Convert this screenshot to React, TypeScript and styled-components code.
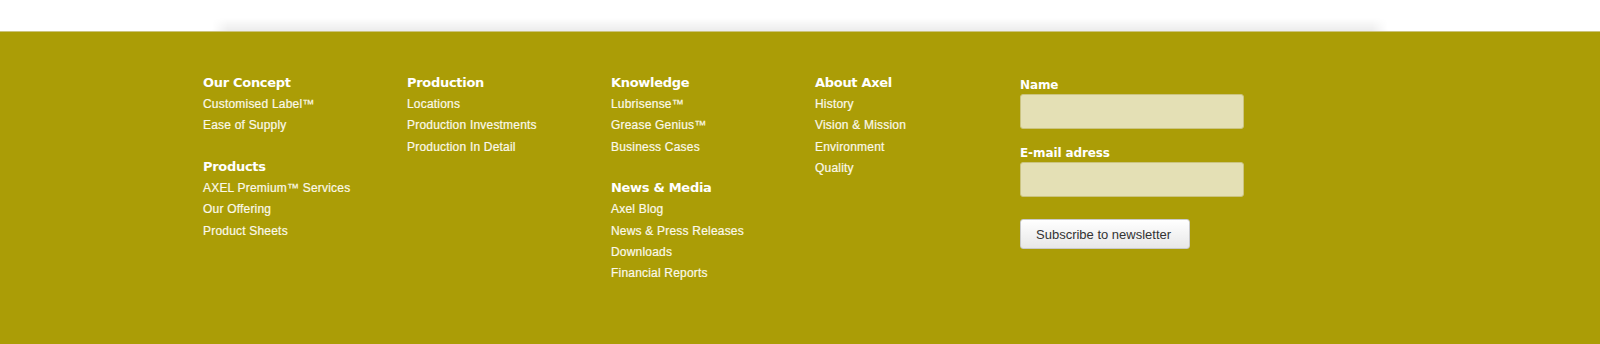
import styled, { createGlobalStyle } from 'styled-components'

const GlobalStyle = createGlobalStyle`
  html, body { margin: 0; padding: 0; background: #fff; }
  body { font-family: "Liberation Sans", Arial, sans-serif; }
`

const COLUMNS: { title: string; links: string[] }[][] = [
  [
    { title: 'Our Concept', links: ['Customised Label™', 'Ease of Supply'] },
    { title: 'Products', links: ['AXEL Premium™ Services', 'Our Offering', 'Product Sheets'] },
  ],
  [
    { title: 'Production', links: ['Locations', 'Production Investments', 'Production In Detail'] },
  ],
  [
    { title: 'Knowledge', links: ['Lubrisense™', 'Grease Genius™', 'Business Cases'] },
    { title: 'News & Media', links: ['Axel Blog', 'News & Press Releases', 'Downloads', 'Financial Reports'] },
  ],
  [
    { title: 'About Axel', links: ['History', 'Vision & Mission', 'Environment', 'Quality'] },
  ],
]

// ─── Layout ───────────────────────────────────────────────────────────────────

const Top = styled.div`
  height: 31px;
  display: flex;
  justify-content: center;
  align-items: flex-end;
`

const Shade = styled.div`
  width: 1176px;
  height: 13px;
  background: linear-gradient(to bottom, rgba(0, 0, 0, 0), rgba(0, 0, 0, 0.075));
  -webkit-mask-image: linear-gradient(to right, transparent 0, #000 16px, #000 calc(100% - 16px), transparent 100%);
  mask-image: linear-gradient(to right, transparent 0, #000 16px, #000 calc(100% - 16px), transparent 100%);
`

const Footer = styled.footer`
  height: 313px;
  box-sizing: border-box;
  background: #ab9d06;
  border-top: 1px solid #cbc37c;
  padding-top: 40px;
`

const Inner = styled.div`
  display: flex;
  padding-left: 203px;
`

const Column = styled.div`
  width: 204px;
  display: flex;
  flex-direction: column;
  gap: 19px;
`

const Group = styled.div`
  display: flex;
  flex-direction: column;
`

const Heading = styled.h4`
  margin: 0;
  font-family: "DejaVu Sans", Verdana, sans-serif;
  font-weight: bold;
  font-size: 13px;
  line-height: 22px;
  color: #fff;
  letter-spacing: -0.3px;
`

const LinkItem = styled.a`
  display: block;
  font-family: "Liberation Sans", Arial, sans-serif;
  font-size: 12px;
  line-height: 21.4px;
  color: #fbf9ea;
  text-decoration: none;
  letter-spacing: 0.2px;
  -webkit-text-stroke: 0.2px #fbf9ea;
`

const Form = styled.form`
  width: 224px;
  margin-left: 1px;
  padding-top: 4px;
  display: flex;
  flex-direction: column;
`

const Label = styled.label`
  font-family: "DejaVu Sans", Verdana, sans-serif;
  font-weight: bold;
  font-size: 12px;
  line-height: 18px;
  color: #fff;
  letter-spacing: -0.1px;
`

const Input = styled.input<{ $last?: boolean }>`
  box-sizing: border-box;
  width: 224px;
  height: 35px;
  margin: 0 0 ${p => (p.$last ? '22px' : '15px')} 0;
  background: #e4e0b5;
  border: 1px solid #cbc47f;
  border-radius: 3px;
  outline: none;
`

const Button = styled.button`
  align-self: flex-start;
  height: 30px;
  padding: 0 18px 0 15px;
  font-family: "Liberation Sans", Arial, sans-serif;
  font-size: 13px;
  color: #333;
  background: linear-gradient(to bottom, #ffffff, #e8e8e8);
  border: 1px solid #c9c9c9;
  border-radius: 3px;
  cursor: pointer;
`

// ─── App ──────────────────────────────────────────────────────────────────────

export default function App() {
  return (
    <>
      <GlobalStyle />
      <Top>
        <Shade />
      </Top>
      <Footer>
        <Inner>
          {COLUMNS.map((groups, i) => (
            <Column key={i}>
              {groups.map(g => (
                <Group key={g.title}>
                  <Heading>{g.title}</Heading>
                  {g.links.map(l => (
                    <LinkItem key={l} href="#">{l}</LinkItem>
                  ))}
                </Group>
              ))}
            </Column>
          ))}
          <Form onSubmit={e => e.preventDefault()}>
            <Label htmlFor="nl-name">Name</Label>
            <Input id="nl-name" type="text" />
            <Label htmlFor="nl-mail">E-mail adress</Label>
            <Input id="nl-mail" type="email" $last />
            <Button type="submit">Subscribe to newsletter</Button>
          </Form>
        </Inner>
      </Footer>
    </>
  )
}
